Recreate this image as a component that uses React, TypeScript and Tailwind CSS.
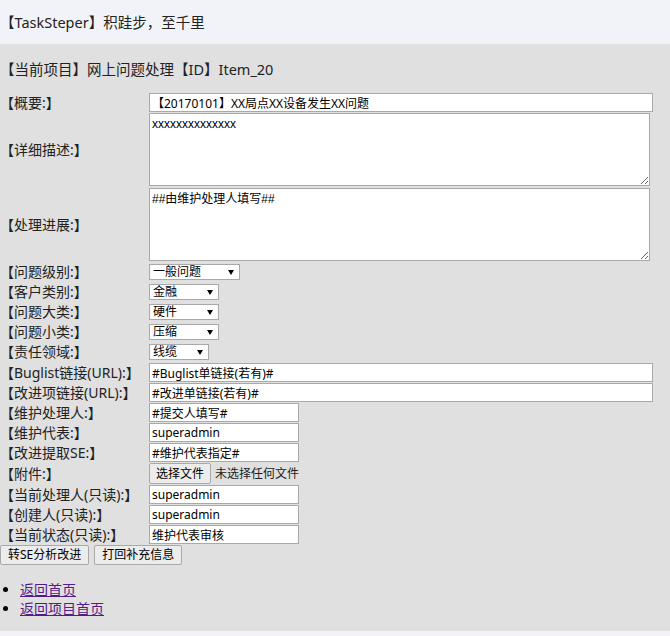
import type { ReactNode } from 'react';

const font = "font-['Noto_Sans','Noto_Sans_CJK_SC',sans-serif]";

function Row({ label, children, className }: { label: string; children: ReactNode; className: string }) {
  return (
    <div className={`grid grid-cols-[149px_1fr] ${className}`}>
      <div className="flex items-center whitespace-nowrap text-[14px] leading-[16px] text-[#222]">{label}</div>
      <div className="flex items-center">{children}</div>
    </div>
  );
}

function TextInput({ value, wide }: { value: string; wide?: boolean }) {
  return (
    <input
      type="text"
      defaultValue={value}
      className={`${wide ? 'w-[504px]' : 'w-[150px]'} h-[19px] border border-[#a9a9a9] bg-white px-[2px] text-[12px] leading-[17px] text-black outline-none ${font}`}
    />
  );
}

function Select({ value, width }: { value: string; width: string }) {
  return (
    <div className={`flex h-[16px] items-center border border-[#a9a9a9] bg-white pl-[3px] pr-[5px] ${width}`}>
      <select className={`min-w-0 flex-1 appearance-none bg-transparent text-[12px] leading-[14px] text-black outline-none ${font}`}>
        <option>{value}</option>
      </select>
      <svg width="6" height="5" viewBox="0 0 6 5" className="shrink-0">
        <path d="M0 0H6L3 5Z" fill="#000" />
      </svg>
    </div>
  );
}

function Button({ children }: { children: ReactNode }) {
  return (
    <button
      type="button"
      className={`h-[20px] rounded-[2px] border border-[#a9a9a9] bg-[#ececec] px-[7px] text-[12px] leading-[18px] text-black ${font}`}
    >
      {children}
    </button>
  );
}

export default function App() {
  return (
    <div className={`min-h-screen bg-[#f2f3f8] ${font}`}>
      <div className="flex h-[44px] items-center text-[14.5px] leading-[20px] text-[#222]">【TaskSteper】积跬步，至千里</div>

      <div className="bg-[#e0e0e0] pb-[13px] pt-[15px]">
        <div className="mb-[14px] text-[14.5px] leading-[20px] text-[#222]">【当前项目】网上问题处理【ID】Item_20</div>

        <Row label="【概要:】" className="mb-[1px]">
          <TextInput value="【20170101】XX局点XX设备发生XX问题" wide />
        </Row>
        <Row label="【详细描述:】" className="mb-[2px]">
          <textarea
            defaultValue="xxxxxxxxxxxxxx"
            className="h-[73px] w-[501px] border border-[#a9a9a9] bg-white px-[2px] py-[2px] font-['Liberation_Sans','Noto_Sans_CJK_SC',sans-serif] text-[12px] leading-[16px] text-black outline-none"
          />
        </Row>
        <Row label="【处理进展:】" className="mb-[3px]">
          <textarea
            defaultValue="##由维护处理人填写##"
            className="h-[73px] w-[501px] border border-[#a9a9a9] bg-white px-[2px] py-[2px] font-['Liberation_Sans','Noto_Sans_CJK_SC',sans-serif] text-[12px] leading-[16px] text-black outline-none"
          />
        </Row>
        <Row label="【问题级别:】" className="mb-[4px]">
          <Select value="一般问题" width="w-[91px]" />
        </Row>
        <Row label="【客户类别:】" className="mb-[4px]">
          <Select value="金融" width="w-[70px]" />
        </Row>
        <Row label="【问题大类:】" className="mb-[4px]">
          <Select value="硬件" width="w-[70px]" />
        </Row>
        <Row label="【问题小类:】" className="mb-[4px]">
          <Select value="压缩" width="w-[70px]" />
        </Row>
        <Row label="【责任领域:】" className="mb-[3px]">
          <Select value="线缆" width="w-[60px]" />
        </Row>
        <Row label="【Buglist链接(URL):】" className="mb-[1px]">
          <TextInput value="#Buglist单链接(若有)#" wide />
        </Row>
        <Row label="【改进项链接(URL):】" className="mb-[1px]">
          <TextInput value="#改进单链接(若有)#" wide />
        </Row>
        <Row label="【维护处理人:】" className="mb-[1px]">
          <TextInput value="#提交人填写#" />
        </Row>
        <Row label="【维护代表:】" className="mb-[1px]">
          <TextInput value="superadmin" />
        </Row>
        <Row label="【改进提取SE:】" className="mb-[1px]">
          <TextInput value="#维护代表指定#" />
        </Row>
        <Row label="【附件:】" className="mb-[1px]">
          <div className="flex h-[21px] items-center gap-[4px]">
            <button
              type="button"
              className={`h-[21px] rounded-[2px] border border-[#a9a9a9] bg-[#ececec] px-[6px] text-[12px] leading-[19px] text-black ${font}`}
            >
              选择文件
            </button>
            <span className="text-[12px] leading-[16px] text-[#222]">未选择任何文件</span>
          </div>
        </Row>
        <Row label="【当前处理人(只读):】" className="mb-[1px]">
          <TextInput value="superadmin" />
        </Row>
        <Row label="【创建人(只读):】" className="mb-[1px]">
          <TextInput value="superadmin" />
        </Row>
        <Row label="【当前状态(只读):】" className="mb-[1px]">
          <TextInput value="维护代表审核" />
        </Row>

        <div className="flex gap-[5px]">
          <Button>转SE分析改进</Button>
          <Button>打回补充信息</Button>
        </div>

        <ul className="mt-[15px] list-disc pl-[20px] text-[14px] leading-[19px]">
          <li>
            <a href="#" className="text-[#551a8b] underline">返回首页</a>
          </li>
          <li>
            <a href="#" className="text-[#551a8b] underline">返回项目首页</a>
          </li>
        </ul>
      </div>
    </div>
  );
}
